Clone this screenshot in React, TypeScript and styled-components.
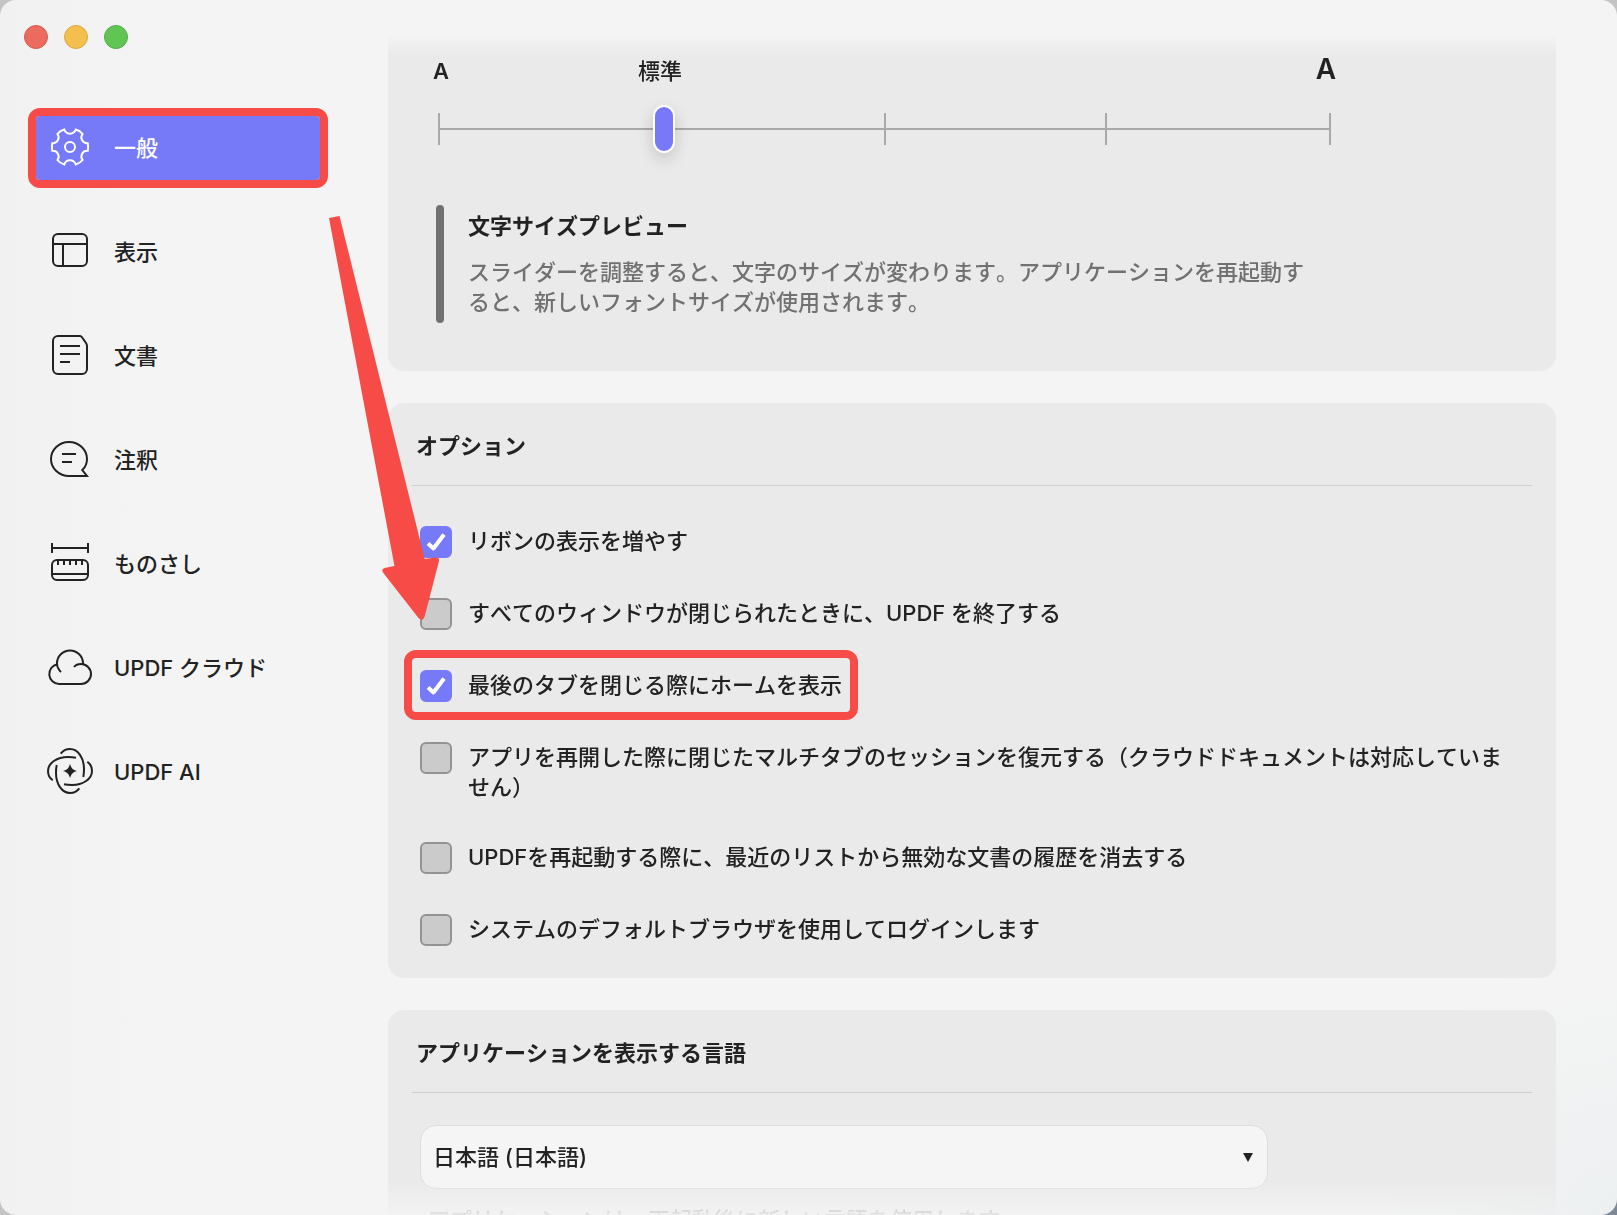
import React, { useState } from "react";
import styled, { createGlobalStyle, css } from "styled-components";

const color = {
  ink: "#222222",
  muted: "#717171",
  accent: "#7679f8",
  mark: "#f64b46",
  card: "#eaeaea",
  line: "#d0d0d0",
  track: "#a9a9a9",
};

const GlobalStyle = createGlobalStyle`
  * { box-sizing: border-box; }
  body {
    margin: 0;
    background: linear-gradient(135deg, #c4c4c4 70%, #7b8997);
    color: ${color.ink};
    font-family: Inter, "Noto Sans CJK JP", sans-serif;
    font-size: 22px;
    font-weight: 500;
    font-kerning: none;
    line-height: 30px;
  }
  button, input, select { margin: 0; font: inherit; color: inherit; }
`;

const Window = styled.div`
  position: relative;
  display: flex;
  height: 100vh;
  overflow: hidden;
  border-radius: 16px;
  background:
    radial-gradient(circle at 100% 100%, #edf0f1, transparent 260px),
    linear-gradient(90deg, #f1f1f1, #f4f4f4 180px);
`;

const Sidebar = styled.aside`
  flex: none;
  width: 388px;
  padding: 25px 68px 0 36px;
`;

const WindowControls = styled.div`
  display: flex;
  gap: 16px;
  margin: 0 0 67px -12px;
`;

const ControlDot = styled.button<{ $fill: string; $edge: string }>`
  width: 24px;
  height: 24px;
  padding: 0;
  border: 1px solid ${(p) => p.$edge};
  border-radius: 50%;
  background: ${(p) => p.$fill};
`;

const Nav = styled.nav`
  display: flex;
  flex-direction: column;
  gap: 40px;
`;

const NavItem = styled.button<{ $active: boolean }>`
  display: flex;
  align-items: center;
  gap: 20px;
  height: 64px;
  padding: 0 10px;
  border: 0;
  border-radius: 4px;
  background: transparent;
  text-align: left;
  ${(p) =>
    p.$active &&
    css`
      background: ${color.accent};
      color: #ffffff;
      outline: 8px solid ${color.mark};
    `}
`;

const Icon = styled.svg`
  flex: none;
  width: 48px;
  height: 48px;
  overflow: visible;
  fill: none;
  stroke: currentColor;
  stroke-width: 2;
`;

const Content = styled.main`
  flex: 1;
  min-width: 0;
  display: flex;
  flex-direction: column;
  gap: 32px;
  margin-top: 32px;
  padding-right: 61px;
  overflow: hidden;
  mask-image: linear-gradient(
    to bottom,
    transparent 4px,
    #000 22px,
    #000 calc(100% - 34px),
    rgba(0, 0, 0, 0.1)
  );
`;

const Card = styled.section<{ $continued?: boolean }>`
  flex: none;
  padding: ${(p) => (p.$continued ? "22px 24px 48px" : "0 24px 32px")};
  border-radius: ${(p) => (p.$continued ? "0 0 16px 16px" : "16px")};
  background: ${color.card};
`;

const CardTitle = styled.h2`
  margin: 0;
  padding: 28px 4px 24px;
  border-bottom: 1px solid ${color.line};
  font-size: 22px;
  font-weight: 700;
`;

const SizeSlider = styled.div`
  display: grid;
  max-width: 924px;
  padding-left: 21px;
  row-gap: 19px;
`;

const ScaleLabels = styled.div`
  display: grid;
  grid-template-columns: 205px 1fr auto;
  align-items: baseline;
`;

const SmallSample = styled.span`
  font-size: 22px;
  font-weight: 600;
`;

const LargeSample = styled.span`
  font-size: 28px;
  font-weight: 600;
`;

const SliderBody = styled.div`
  display: grid;
  align-items: center;
  & > * { grid-area: 1 / 1; }
`;

const Track = styled.div`
  display: grid;
  grid-template-columns: 226fr 220fr 220fr 226fr;
  height: 32px;
  margin: 0 5px;
  background: linear-gradient(${color.track}, ${color.track}) center / 100% 2px no-repeat;
`;

const TrackSegment = styled.span`
  border-left: 2px solid ${color.track};
  &:last-child { border-right: 2px solid ${color.track}; }
`;

const Range = styled.input`
  appearance: none;
  width: 100%;
  height: 48px;
  background: transparent;
  &::-webkit-slider-thumb {
    appearance: none;
    width: 22px;
    height: 48px;
    border: 2px solid #ffffff;
    border-radius: 11px;
    background: ${color.accent};
    box-shadow: 0 6px 16px rgba(0, 0, 0, 0.16);
  }
`;

const Preview = styled.div`
  display: flex;
  gap: 24px;
  max-width: 910px;
  margin: 52px 0 0 24px;
`;

const PreviewBar = styled.span`
  flex: none;
  width: 8px;
  border-radius: 4px;
  background: ${color.muted};
`;

const PreviewText = styled.div`
  padding: 6px 32px 6px 0;
`;

const PreviewTitle = styled.h3`
  margin: 0 0 16px;
  font-size: 22px;
  font-weight: 700;
`;

const PreviewBody = styled.p`
  margin: 0;
  color: ${color.muted};
`;

const OptionList = styled.div`
  display: flex;
  flex-direction: column;
  align-items: flex-start;
  gap: 40px;
  padding: 40px 24px 0 8px;
`;

const Option = styled.label<{ $marked: boolean }>`
  position: relative;
  display: flex;
  gap: 16px;
  ${(p) =>
    p.$marked &&
    css`
      &::after {
        content: "";
        position: absolute;
        inset: -20px -16px -18px;
        border: 8px solid ${color.mark};
        border-radius: 12px;
        pointer-events: none;
      }
    `}
`;

const CheckBox = styled.span`
  display: grid;
  flex: none;
  width: 32px;
  height: 32px;
  & > * { grid-area: 1 / 1; }
`;

const CheckInput = styled.input`
  appearance: none;
  width: 32px;
  height: 32px;
  border: 2px solid #939393;
  border-radius: 6px;
  background: #cbcbcb;
  &:checked {
    border-color: ${color.accent};
    background: ${color.accent};
  }
  & + svg { visibility: hidden; }
  &:checked + svg { visibility: visible; }
`;

const CheckMark = styled.svg`
  width: 32px;
  height: 32px;
  fill: none;
  stroke: #ffffff;
  stroke-width: 4;
  stroke-linejoin: round;
  pointer-events: none;
`;

const LanguageField = styled.div`
  display: grid;
  align-items: center;
  max-width: 856px;
  padding: 32px 0 0 8px;
  & > * { grid-area: 1 / 1; }
`;

const LanguageSelect = styled.select`
  appearance: none;
  width: 100%;
  height: 64px;
  padding: 0 48px 0 12px;
  border: 1px solid #dedede;
  border-radius: 16px;
  background: #f5f5f5;
`;

const SelectArrow = styled.svg`
  justify-self: end;
  width: 10px;
  height: 10px;
  margin-right: 15px;
  fill: ${color.ink};
  pointer-events: none;
`;

const LanguageNote = styled.p`
  margin: 16px 16px 0;
  color: ${color.muted};
`;

const Pointer = styled.svg`
  position: absolute;
  left: 320px;
  top: 210px;
  width: 130px;
  height: 420px;
  fill: ${color.mark};
  pointer-events: none;
`;

const aiArc =
  "M14.7 5.7C17 2.5 20 1 24 1C32 1 38 10 38 21C38 24 37.8 26.5 37.3 29";

const navItems = [
  {
    label: "一般",
    icon: (
      <g transform="translate(0 -1)">
        <path d="M29.7 6.500C32.500 7.300 35 9 36.600 11A5.800 5.800 0 0 0 41.800 20.300C42.200 22.800 42.200 25.200 41.800 27.700A5.800 5.800 0 0 0 36.600 37C35 39 32.500 40.700 29.700 41.500A6 6 0 0 0 18.300 41.500C15.500 40.700 13 39 11.400 37A5.800 5.800 0 0 0 6.200 27.700C5.800 25.200 5.800 22.800 6.200 20.300A5.800 5.800 0 0 0 11.400 11C13 9 15.500 7.300 18.300 6.500A6 6 0 0 0 29.700 6.500Z" />
        <circle cx="24" cy="24" r="5" />
      </g>
    ),
  },
  {
    label: "表示",
    icon: (
      <>
        <rect x="7" y="6" width="34" height="32" rx="5" />
        <path d="M7 16H41M17 16V38" />
      </>
    ),
  },
  {
    label: "文書",
    icon: (
      <path d="M34 4H12A5 5 0 0 0 7 9V37A5 5 0 0 0 12 42H36A5 5 0 0 0 41 37V14Q41 12.500 40 11L36 5.200Q35.200 4 34 4ZM14 14H34M14 22H34M14 30H24" />
    ),
  },
  {
    label: "注釈",
    icon: (
      <path d="M41 40H23A18 17 0 1 1 41 23C41 27 39.500 31 36.300 34ZM16 18H30M16 26H26" />
    ),
  },
  {
    label: "ものさし",
    icon: (
      <>
        <path d="M6 8H42M6 3V13M42 3V13M6 34H42M12 20V25M18 20V25M24 20V25M30 20V25M36 20V25" />
        <rect x="6" y="20" width="36" height="20" rx="5" />
      </>
    ),
  },
  {
    label: "UPDF クラウド",
    icon: (
      <path d="M15 28C12 25 11 22 11 19.500A13 13 0 0 1 37 19.500V20.200M11.300 20.200A10 10 0 0 0 13 40H35A10 10 0 0 0 35 20C32 20 29.500 21 28 23" />
    ),
  },
  {
    label: "UPDF AI",
    icon: (
      <>
        {[0, 90, 180, 270].map((angle) => (
          <path key={angle} d={aiArc} transform={`rotate(${angle} 24 23)`} />
        ))}
        <path
          d="M24 16C25.500 20.500 26.500 21.500 31 23C26.500 24.500 25.500 25.500 24 30C22.500 25.500 21.500 24.500 17 23C21.500 21.500 22.500 20.500 24 16Z"
          fill="currentColor"
          stroke="none"
        />
      </>
    ),
  },
];

const initialOptions = [
  { label: "リボンの表示を増やす", checked: true },
  { label: "すべてのウィンドウが閉じられたときに、UPDF を終了する", checked: false },
  { label: "最後のタブを閉じる際にホームを表示", checked: true, marked: true },
  {
    label:
      "アプリを再開した際に閉じたマルチタブのセッションを復元する（クラウドドキュメントは対応していません）",
    checked: false,
  },
  {
    label: "UPDFを再起動する際に、最近のリストから無効な文書の履歴を消去する",
    checked: false,
  },
  { label: "システムのデフォルトブラウザを使用してログインします", checked: false },
];

export default function App() {
  const [active, setActive] = useState(0);
  return (
    <>
      <GlobalStyle />
      <Window lang="ja">
        <Sidebar>
          <WindowControls>
            <ControlDot aria-label="閉じる" $fill="#ec6a5e" $edge="#d55b50" />
            <ControlDot aria-label="しまう" $fill="#f5bf4f" $edge="#dba844" />
            <ControlDot aria-label="拡大" $fill="#61c554" $edge="#52ad47" />
          </WindowControls>
          <Nav>
            {navItems.map((item, i) => (
              <NavItem
                key={item.label}
                type="button"
                $active={i === active}
                aria-current={i === active ? "page" : undefined}
                onClick={() => setActive(i)}
              >
                <Icon viewBox="0 0 48 48" aria-hidden="true">
                  {item.icon}
                </Icon>
                {item.label}
              </NavItem>
            ))}
          </Nav>
        </Sidebar>

        <Content>
          <Card $continued>
            <SizeSlider>
              <ScaleLabels>
                <SmallSample>A</SmallSample>
                <label htmlFor="text-size">標準</label>
                <LargeSample>A</LargeSample>
              </ScaleLabels>
              <SliderBody>
                <Track>
                  <TrackSegment />
                  <TrackSegment />
                  <TrackSegment />
                  <TrackSegment />
                </Track>
                <Range id="text-size" type="range" min={0} max={4} defaultValue={1} />
              </SliderBody>
            </SizeSlider>
            <Preview>
              <PreviewBar />
              <PreviewText>
                <PreviewTitle>文字サイズプレビュー</PreviewTitle>
                <PreviewBody>
                  スライダーを調整すると、文字のサイズが変わります。アプリケーションを再起動すると、新しいフォントサイズが使用されます。
                </PreviewBody>
              </PreviewText>
            </Preview>
          </Card>

          <Card>
            <CardTitle>オプション</CardTitle>
            <OptionList>
              {initialOptions.map((option) => (
                <Option key={option.label} $marked={Boolean(option.marked)}>
                  <CheckBox>
                    <CheckInput type="checkbox" defaultChecked={option.checked} />
                    <CheckMark viewBox="0 0 32 32" aria-hidden="true">
                      <path d="M8 17.500L13.500 22.500L24 8.500" />
                    </CheckMark>
                  </CheckBox>
                  <span>{option.label}</span>
                </Option>
              ))}
            </OptionList>
          </Card>

          <Card>
            <CardTitle id="language-title">アプリケーションを表示する言語</CardTitle>
            <LanguageField>
              <LanguageSelect aria-labelledby="language-title" defaultValue="ja">
                <option value="ja">日本語 (日本語)</option>
              </LanguageSelect>
              <SelectArrow viewBox="0 0 10 10" aria-hidden="true">
                <path d="M0 1H10L5 10Z" />
              </SelectArrow>
            </LanguageField>
            <LanguageNote>
              アプリケーションは、再起動後に新しい言語を使用します
            </LanguageNote>
          </Card>
        </Content>

        <Pointer viewBox="0 0 130 420" aria-hidden="true">
          <path d="M9 8L19.500 6L104.700 349L116 347.500Q119.500 347.500 119 351L104.500 407Q102.500 412 98.500 408L63 362.500Q61 359 64.500 358L74.500 356Z" />
        </Pointer>
      </Window>
    </>
  );
}
